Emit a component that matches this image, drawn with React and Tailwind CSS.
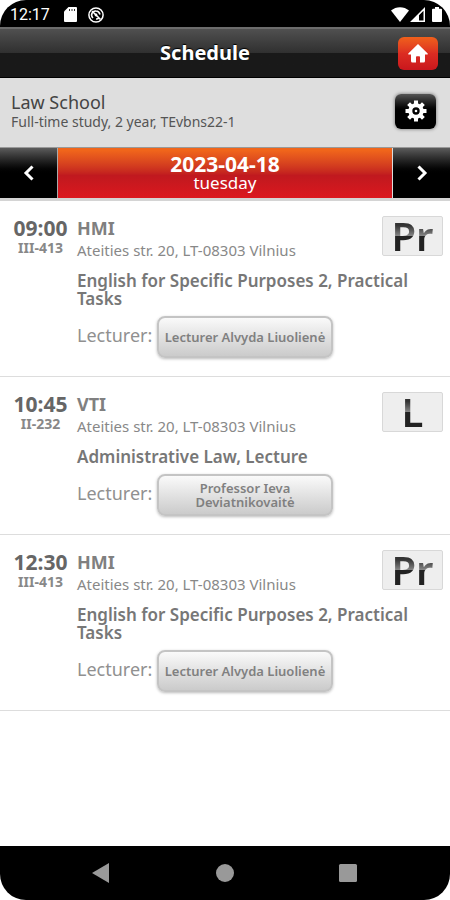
const lessons = [
  {
    id: 1,
    time: "09:00",
    room: "III-413",
    building: "HMI",
    address: "Ateities str. 20, LT-08303 Vilnius",
    title: "English for Specific Purposes 2, Practical Tasks",
    lecturer: "Lecturer Alvyda Liuolienė",
    type: "Pr",
  },
  {
    id: 2,
    time: "10:45",
    room: "II-232",
    building: "VTI",
    address: "Ateities str. 20, LT-08303 Vilnius",
    title: "Administrative Law, Lecture",
    lecturer: "Professor Ieva Deviatnikovaitė",
    type: "L",
  },
  {
    id: 3,
    time: "12:30",
    room: "III-413",
    building: "HMI",
    address: "Ateities str. 20, LT-08303 Vilnius",
    title: "English for Specific Purposes 2, Practical Tasks",
    lecturer: "Lecturer Alvyda Liuolienė",
    type: "Pr",
  },
];

function StatusBar() {
  return (
    <div className="flex h-[27px] items-center justify-between bg-black pt-[2px] pr-2 pl-[10px] text-white">
      <div className="flex items-center">
        <span className="w-[54px] font-['Roboto',sans-serif] text-[16px] leading-5">12:17</span>
        <svg className="h-[15px] w-[13px]" viewBox="0 0 13 15">
          <path fill="currentColor" d="M4.5 0H12a1 1 0 0 1 1 1v13a1 1 0 0 1-1 1H1a1 1 0 0 1-1-1V4.5z" />
          <path stroke="#000" strokeWidth="0.8" d="M5.5 2v2M8 2v2M10.5 2v2" />
        </svg>
        <svg className="ml-[11px] h-4 w-4" viewBox="0 0 16 16" fill="none" stroke="currentColor">
          <circle cx="8" cy="8" r="7.1" strokeWidth="1.5" />
          <path strokeWidth="1.6" d="M5 11A4 4 0 0 1 8 4q3 0 4 3.500M11 11a4 4 0 0 1-3 1M4 4l8.500 8.500" />
          <circle cx="8" cy="8" r="1.400" fill="currentColor" stroke="none" />
        </svg>
      </div>
      <div className="flex items-center">
        <svg className="h-[15px] w-[18px]" viewBox="0 0 18 15" fill="currentColor">
          <path d="M9 15 0 3.5C5-1 13-1 18 3.5z" />
        </svg>
        <svg className="ml-px h-[15px] w-[15px]" viewBox="0 0 15 15">
          <path fill="currentColor" fillRule="evenodd" d="M15 0v15H0zM13.500 3.800 9 8.300v5.200h4.500z" />
        </svg>
        <svg className="ml-[7px] h-[15px] w-[10px]" viewBox="0 0 10 15" fill="currentColor">
          <path d="M3 0h4v1.8h2a1 1 0 0 1 1 1V14a1 1 0 0 1-1 1H1a1 1 0 0 1-1-1V2.800a1 1 0 0 1 1-1h2z" />
        </svg>
      </div>
    </div>
  );
}

function Header() {
  return (
    <header className="flex h-[51px] items-center border-t-2 border-b border-t-[#6c6c6c] border-b-black bg-linear-to-b from-[#505050] from-0% via-[#303030] via-50% to-[#191919] to-50% px-3">
      <h1 className="flex-1 text-center text-[20px] leading-7 font-bold text-white text-shadow-[0_-1px_1px_#000]">
        Schedule
      </h1>
      <button
        type="button"
        aria-label="Home"
        className="flex h-[33px] w-10 items-center justify-center rounded-md bg-linear-to-b from-[#f0601b] via-[#dc2c22] via-50% to-[#c9161d] text-white"
      >
        <svg className="h-[19px] w-5" viewBox="0 0 20 19" fill="currentColor">
          <path d="M10 0 .3 9.500q-.4 1 .7 1h2V17q0 1.500 1.500 1.500H8V13q0-.8.8-.8h2.400q.8 0 .8.800v5.500h3.500q1.500 0 1.500-1.500v-6.500h2q1.100 0 .7-1z" />
        </svg>
      </button>
    </header>
  );
}

function GearIcon() {
  return (
    <svg className="h-[22px] w-[22px]" viewBox="0 0 22 22" fill="none" stroke="currentColor">
      <path
        strokeWidth="4"
        d="M11 .5V5M11 17v4.500M.5 11H5M17 11h4.500M3.600 3.600l3.200 3.200M15.200 15.200l3.200 3.200M3.600 18.400l3.200-3.200M15.200 6.800l3.200-3.200"
      />
      <circle cx="11" cy="11" r="5.700" strokeWidth="4" />
      <circle cx="11" cy="11" r="1.300" fill="currentColor" stroke="none" />
    </svg>
  );
}

function Chevron({ d }) {
  return (
    <svg className="h-4 w-3" viewBox="0 0 12 16" fill="none" stroke="currentColor" strokeWidth="3">
      <path d={d} />
    </svg>
  );
}

function GroupInfo() {
  return (
    <section className="flex h-[69px] items-center justify-between bg-[#dedede] pr-[14px] pb-[3px] pl-[11px]">
      <div>
        <h2 className="text-[18px] leading-[22px] text-[#444]">Law School</h2>
        <p className="text-[14px] leading-[18px] text-[#555]">Full-time study, 2 year, TEvbns22-1</p>
      </div>
      <button
        type="button"
        aria-label="Settings"
        className="flex h-[35px] w-[41px] items-center justify-center rounded-md bg-linear-to-b from-[#555] to-black to-55% text-white shadow-[0_0_3px_1px_#999]"
      >
        <GearIcon />
      </button>
    </section>
  );
}

function DateBar() {
  return (
    <nav className="flex h-[54px] border-t border-b-3 border-t-[#999] border-b-[#d4d4d4]">
      <button
        type="button"
        aria-label="Previous day"
        className="flex w-[58px] items-center justify-center border-r border-[#aaa] bg-linear-to-b from-[#5c5c5c] to-black to-55% text-white"
      >
        <Chevron d="M9.500 1.500 3 8l6.500 6.500" />
      </button>
      <div className="flex flex-1 flex-col items-center justify-center bg-linear-to-b from-[#f0651b] from-5% via-[#c0191f] via-55% to-[#dc171e] text-white">
        <span className="text-[21px] leading-5 font-bold">2023-04-18</span>
        <span className="text-[17px] leading-[18px]">tuesday</span>
      </div>
      <button
        type="button"
        aria-label="Next day"
        className="flex w-[58px] items-center justify-center border-l border-[#ddd] bg-linear-to-b from-[#5c5c5c] to-black to-55% text-white"
      >
        <Chevron d="M2.500 1.500 9 8l-6.500 6.500" />
      </button>
    </nav>
  );
}

function Lesson({ lesson }) {
  return (
    <li className="flex border-b border-[#ddd] pt-[15px] pb-[18px]">
      <div className="w-[77px] shrink-0 pl-1 text-center">
        <p className="text-[21px] leading-6 font-bold text-[#666]">{lesson.time}</p>
        <p className="text-[14px] leading-4 font-bold text-[#888]">{lesson.room}</p>
      </div>
      <div className="min-w-0 flex-1">
        <div className="flex h-[44px] justify-between pr-[7px]">
          <div>
            <p className="text-[18px] leading-6 font-bold text-[#808080]">{lesson.building}</p>
            <p className="text-[15px] leading-5 text-[#888]">{lesson.address}</p>
          </div>
          <div className="flex h-10 w-[61px] items-center justify-center rounded-xs border border-[#d8d8d8] bg-[#eee]">
            <span className="bg-linear-to-b from-[#333] from-20% via-[#888] via-50% to-[#222] to-50% bg-clip-text text-[40px] leading-9 font-semibold text-transparent">
              {lesson.type}
            </span>
          </div>
        </div>
        <h3 className="mt-3 pr-6 text-[17px] leading-[18px] font-semibold text-[#777]">{lesson.title}</h3>
        <div className="mt-2 flex items-start gap-[5px]">
          <span className="w-[75px] text-[18px] leading-[38px] text-[#909090]">Lecturer:</span>
          <button
            type="button"
            className="h-[42px] w-44 rounded-lg border-2 border-[#c4c4c4] bg-linear-to-b from-[#fafafa] to-[#cbcbcb] px-[2px] text-[13px] leading-[14px] font-semibold text-[#808080] shadow-[0_1px_3px_#bbb]"
          >
            {lesson.lecturer}
          </button>
        </div>
      </div>
    </li>
  );
}

function NavigationBar() {
  return (
    <div className="flex h-[54px] items-center justify-center gap-[103px] bg-black text-[#999]">
      <button type="button" aria-label="Back">
        <svg className="h-5 w-5" viewBox="0 0 20 20" fill="currentColor">
          <path d="M17 0v20L0 10z" />
        </svg>
      </button>
      <button type="button" aria-label="Home screen">
        <svg className="h-5 w-5" viewBox="0 0 20 20" fill="currentColor">
          <circle cx="10" cy="10" r="9" />
        </svg>
      </button>
      <button type="button" aria-label="Recent apps">
        <svg className="h-5 w-5" viewBox="0 0 20 20" fill="currentColor">
          <rect x="1" y="1" width="18" height="18" rx="1.500" />
        </svg>
      </button>
    </div>
  );
}

export default function App() {
  return (
    <div className="min-h-screen bg-white font-['Noto_Sans',sans-serif]">
      <div className="flex min-h-screen flex-col overflow-hidden rounded-[26px] bg-white">
        <StatusBar />
        <Header />
        <GroupInfo />
        <DateBar />
        <main className="flex-1">
          <ul>
            {lessons.map((lesson) => (
              <Lesson key={lesson.id} lesson={lesson} />
            ))}
          </ul>
        </main>
        <NavigationBar />
      </div>
    </div>
  );
}
